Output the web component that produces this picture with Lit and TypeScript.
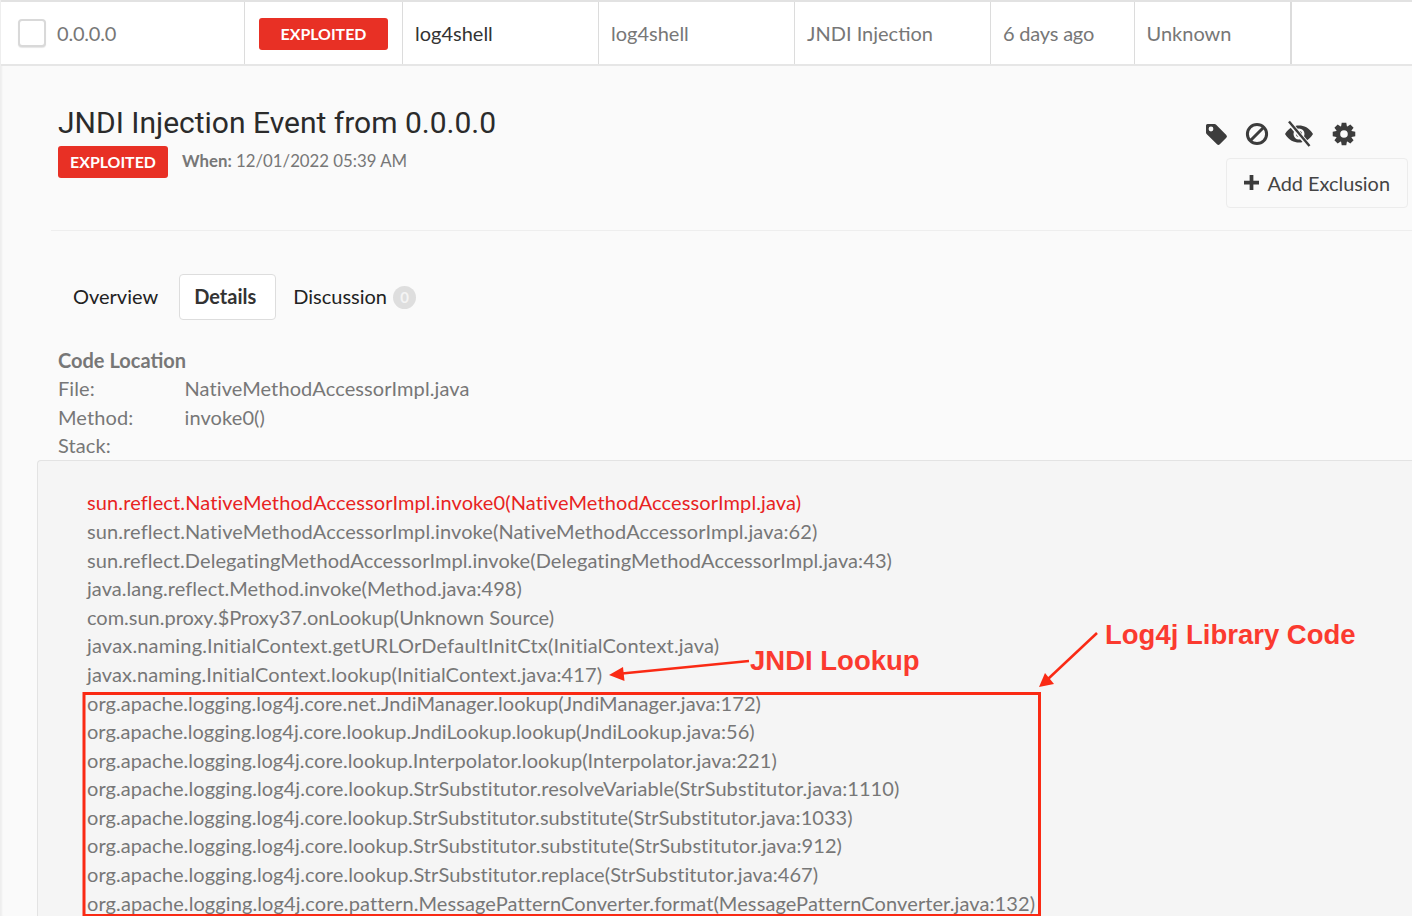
import { LitElement, html, css, svg } from "lit";
import { customElement } from "lit/decorators.js";

const BASE_SPACING = 0.115;

/* Each stack line with the width correction (in px over the whole line) that
   matches its rendered length in the reference. */
const STACK: [string, number][] = [
  ["sun.reflect.NativeMethodAccessorImpl.invoke0(NativeMethodAccessorImpl.java)", 0],
  ["sun.reflect.NativeMethodAccessorImpl.invoke(NativeMethodAccessorImpl.java:62)", -1],
  ["sun.reflect.DelegatingMethodAccessorImpl.invoke(DelegatingMethodAccessorImpl.java:43)", -2],
  ["java.lang.reflect.Method.invoke(Method.java:498)", -3],
  ["com.sun.proxy.$Proxy37.onLookup(Unknown Source)", -6],
  ["javax.naming.InitialContext.getURLOrDefaultInitCtx(InitialContext.java)", 4],
  ["javax.naming.InitialContext.lookup(InitialContext.java:417)", 0],
  ["org.apache.logging.log4j.core.net.JndiManager.lookup(JndiManager.java:172)", -5],
  ["org.apache.logging.log4j.core.lookup.JndiLookup.lookup(JndiLookup.java:56)", -7],
  ["org.apache.logging.log4j.core.lookup.Interpolator.lookup(Interpolator.java:221)", -4],
  ["org.apache.logging.log4j.core.lookup.StrSubstitutor.resolveVariable(StrSubstitutor.java:1110)", -3],
  ["org.apache.logging.log4j.core.lookup.StrSubstitutor.substitute(StrSubstitutor.java:1033)", -5],
  ["org.apache.logging.log4j.core.lookup.StrSubstitutor.substitute(StrSubstitutor.java:912)", -4],
  ["org.apache.logging.log4j.core.lookup.StrSubstitutor.replace(StrSubstitutor.java:467)", -3],
  ["org.apache.logging.log4j.core.pattern.MessagePatternConverter.format(MessagePatternConverter.java:132)", -2],
];

const gear = (() => {
  const n = 8;
  const pts: string[] = [];
  for (let i = 0; i < n; i++) {
    const a = (i / n) * Math.PI * 2;
    const w = 0.26;
    const p = (r: number, t: number) =>
      `${(12 + r * Math.sin(t)).toFixed(2)} ${(12 - r * Math.cos(t)).toFixed(2)}`;
    pts.push(p(8.2, a - w - 0.1), p(11.5, a - w + 0.06), p(11.5, a + w - 0.06), p(8.2, a + w + 0.1));
  }
  return "M" + pts.join("L") + "Z M12 8.2a3.8 3.8 0 1 0 0 7.6a3.8 3.8 0 1 0 0-7.6Z";
})();

@customElement("app-root")
export class AppRoot extends LitElement {
  static styles = css`
    :host {
      display: block;
      position: relative;
      width: 1412px;
      height: 916px;
      overflow: hidden;
      background: #fafafa;
      font-family: Lato, "Liberation Sans", sans-serif;
      font-size: 20px;
      color: #777;
      box-shadow: inset 3px 0 2px -1px #eeeeee;
    }
    .row {
      display: flex;
      height: 66px;
      box-sizing: border-box;
      background: #fff;
      border-top: 2px solid #e2e2e2;
      border-bottom: 2px solid #e6e6e6;
      align-items: stretch;
      margin-left: 1px;
    }
    .cell {
      box-sizing: border-box;
      display: flex;
      align-items: center;
      border-right: 1px solid #dcdcdc;
      padding-left: 12px;
    }
    .c0 { width: 244px; padding-left: 17px; letter-spacing: -0.2px; }
    .c1 { width: 158px; padding-left: 14px; }
    .c2 { width: 196px; color: #333; }
    .c3, .c4 { width: 196px; }
    .c6 { width: 144px; letter-spacing: -0.2px; }
    .c7 { width: 157px; border-right-width: 2px; padding-left: 11.5px; }
    .check {
      width: 28px;
      height: 28px;
      box-sizing: border-box;
      border: 2px solid #d9d9d9;
      border-radius: 4px;
      background: #fff;
      margin-right: 11px;
      box-shadow: 0 1px 1px #e6e6e6;
    }
    .badge {
      display: inline-flex;
      align-items: center;
      justify-content: center;
      box-sizing: border-box;
      background: #e83025;
      color: #fff;
      font-weight: 700;
      font-size: 15.9px;
      letter-spacing: 0;
      border-radius: 3px;
      height: 32px;
      padding-bottom: 2px;
    }
    .c1 .badge { width: 129px; margin-top: 2px; }
    .detail { padding: 0 0 0 37px; }
    .head {
      display: flex;
      justify-content: space-between;
      padding: 39px 4px 0 7px;
      margin-left: 14px;
      border-bottom: 1px solid #eeeeee;
      height: 165px;
      box-sizing: border-box;
    }
    h1 {
      margin: 0;
      font-family: Roboto, sans-serif;
      font-weight: 400;
      font-size: 30px;
      line-height: 36px;
      color: #2b2b2b;
    }
    .meta { display: flex; align-items: center; gap: 14px; margin-top: 5px; font-size: 16.8px; }
    .meta .badge { width: 110px; }
    .meta .when { margin-bottom: 3px; }
    .meta b { font-weight: 700; }
    .tools { display: flex; flex-direction: column; align-items: flex-end; }
    .icons { display: flex; align-items: center; gap: 15px; margin: 10px 52px 5px 0; height: 38px; }
    .icons svg { display: block; fill: #3c3c3c; }
    .icons .ban { margin: 0 -1px 0 1px; }
    .icons svg:last-child { margin-left: 3px; }
    .addbtn {
      display: flex;
      align-items: center;
      justify-content: flex-end;
      gap: 8px;
      box-sizing: border-box;
      width: 182px;
      height: 50px;
      padding: 0 17px 1px 0;
      border: 1px solid #ececec;
      border-radius: 4px;
      color: #444;
      font-size: 19.9px;
    }
    .tabs { display: flex; align-items: center; margin-top: 43px; margin-left: 21px; height: 46px; color: #222; }
    .tab { padding: 0 15px 2px; line-height: 42px; }
    .tab.active {
      background: #fff;
      border: 1px solid #dddddd;
      border-radius: 4px;
      font-weight: 700;
      color: #333;
      line-height: 43px;
      margin: 0 2px 0 6px;
      padding: 0 19px 1px 14px;
    }
    .count {
      display: inline-block;
      width: 23px;
      height: 23px;
      line-height: 23px;
      border-radius: 50%;
      background: #dedede;
      color: #f4f4f4;
      text-align: center;
      font-size: 15px;
      font-weight: 700;
      margin-left: 6px;
      vertical-align: 1px;
    }
    .info { margin: 25.6px 0 0 21px; line-height: 28.6px; letter-spacing: 0.1px; }
    .info .h { font-weight: 700; color: #777; letter-spacing: 0; }
    .kv { display: grid; grid-template-columns: 126.5px 1fr; }
    .stack {
      box-sizing: border-box;
      height: 480px;
      margin-top: 0.4px;
      padding: 27px 0 0 49px;
      background: #f5f5f5;
      border: 1px solid #e3e3e3;
      border-right: none;
      border-radius: 4px 0 0 0;
      line-height: 28.6px;
      white-space: nowrap;
    }
    .first { color: #e8231f; }
    .overlay { position: absolute; left: 0; top: 0; pointer-events: none; }
    .note {
      position: absolute;
      font-family: "Liberation Sans", Arial, sans-serif;
      font-weight: 700;
      font-size: 27.5px;
      line-height: 32px;
      color: #fb3a2f;
      white-space: nowrap;
    }
    .n1 { left: 750px; top: 645px; }
    .n2 { left: 1105px; top: 619px; }
  `;

  render() {
    return html`
      <div class="row">
        <div class="cell c0"><span class="check"></span>0.0.0.0</div>
        <div class="cell c1"><span class="badge">EXPLOITED</span></div>
        <div class="cell c2">log4shell</div>
        <div class="cell c3">log4shell</div>
        <div class="cell c4">JNDI Injection</div>
        <div class="cell c6">6 days ago</div>
        <div class="cell c7">Unknown</div>
      </div>
      <div class="detail">
        <div class="head">
          <div>
            <h1>JNDI Injection Event from 0.0.0.0</h1>
            <div class="meta">
              <span class="badge">EXPLOITED</span>
              <span class="when"><b>When:</b> 12/01/2022 05:39 AM</span>
            </div>
          </div>
          <div class="tools">
            <div class="icons">
              <svg width="24" height="24" viewBox="0 0 24 24"><path fill-rule="evenodd" d="M2 3.500A1.500 1.500 0 0 1 3.500 2H10.500a2 2 0 0 1 1.400.600L22.300 13a2 2 0 0 1 0 2.800L15.800 22.300a2 2 0 0 1-2.800 0L2.600 11.900A2 2 0 0 1 2 10.500ZM7 4.600a2.400 2.400 0 1 0 0 4.800a2.400 2.400 0 1 0 0-4.800Z"/></svg>
              <svg class="ban" width="26" height="26" viewBox="0 0 26 26" style="fill:none"><circle cx="13" cy="13" r="9.600" stroke="#3c3c3c" stroke-width="3"/><path d="M6.500 19.500L19.500 6.500" stroke="#3c3c3c" stroke-width="3"/></svg>
              <svg width="30" height="28" viewBox="0 0 30 28"><path fill-rule="evenodd" d="M1 14C5 7.500 10 5.500 15 5.500s10 2 14 8.500c-4 6.500-9 8.500-14 8.500S5 20.500 1 14ZM15 8.500a5.500 5.500 0 1 0 0 11a5.500 5.500 0 1 0 0-11Z"/><circle cx="15" cy="14" r="3"/><path d="M5 2L25 26" stroke="#fafafa" stroke-width="5"/><path d="M5 1.500L25.500 26" stroke="#3c3c3c" stroke-width="2.400"/></svg>
              <svg width="24" height="24" viewBox="0 0 24 24"><path fill-rule="evenodd" d="${gear}"/></svg>
            </div>
            <div class="addbtn">
              <svg width="15" height="15" viewBox="0 0 16 16" fill="#3c3c3c"><path d="M6 0h4v6h6v4h-6v6H6v-6H0V6h6z"/></svg>
              Add Exclusion
            </div>
          </div>
        </div>
        <div class="tabs">
          <div class="tab">Overview</div>
          <div class="tab active">Details</div>
          <div class="tab">Discussion<span class="count">0</span></div>
        </div>
        <div class="info">
          <div class="h">Code Location</div>
          <div class="kv"><span>File:</span><span>NativeMethodAccessorImpl.java</span></div>
          <div class="kv"><span>Method:</span><span>invoke0()</span></div>
          <div>Stack:</div>
        </div>
        <div class="stack">
          ${STACK.map(
            ([line, fix], i) =>
              html`<div
                class=${i === 0 ? "first" : ""}
                style="letter-spacing:${(BASE_SPACING + fix / line.length).toFixed(3)}px"
              >${line}</div>`
          )}
        </div>
      </div>
      <svg class="overlay" width="1412" height="916" viewBox="0 0 1412 916">
        ${svg`
          <rect x="84" y="693.500" width="955.500" height="222" fill="none" stroke="#fa2a14" stroke-width="3"/>
          <path d="M749 661L622 673.500" stroke="#fa2a14" stroke-width="2.500"/>
          <path d="M609 675L623 667L624.500 681Z" fill="#fa2a14"/>
          <path d="M1097 633L1048 679" stroke="#fa2a14" stroke-width="2.500"/>
          <path d="M1039 687L1045 673L1054 684Z" fill="#fa2a14"/>
        `}
      </svg>
      <div class="note n1">JNDI Lookup</div>
      <div class="note n2">Log4j Library Code</div>
    `;
  }
}
